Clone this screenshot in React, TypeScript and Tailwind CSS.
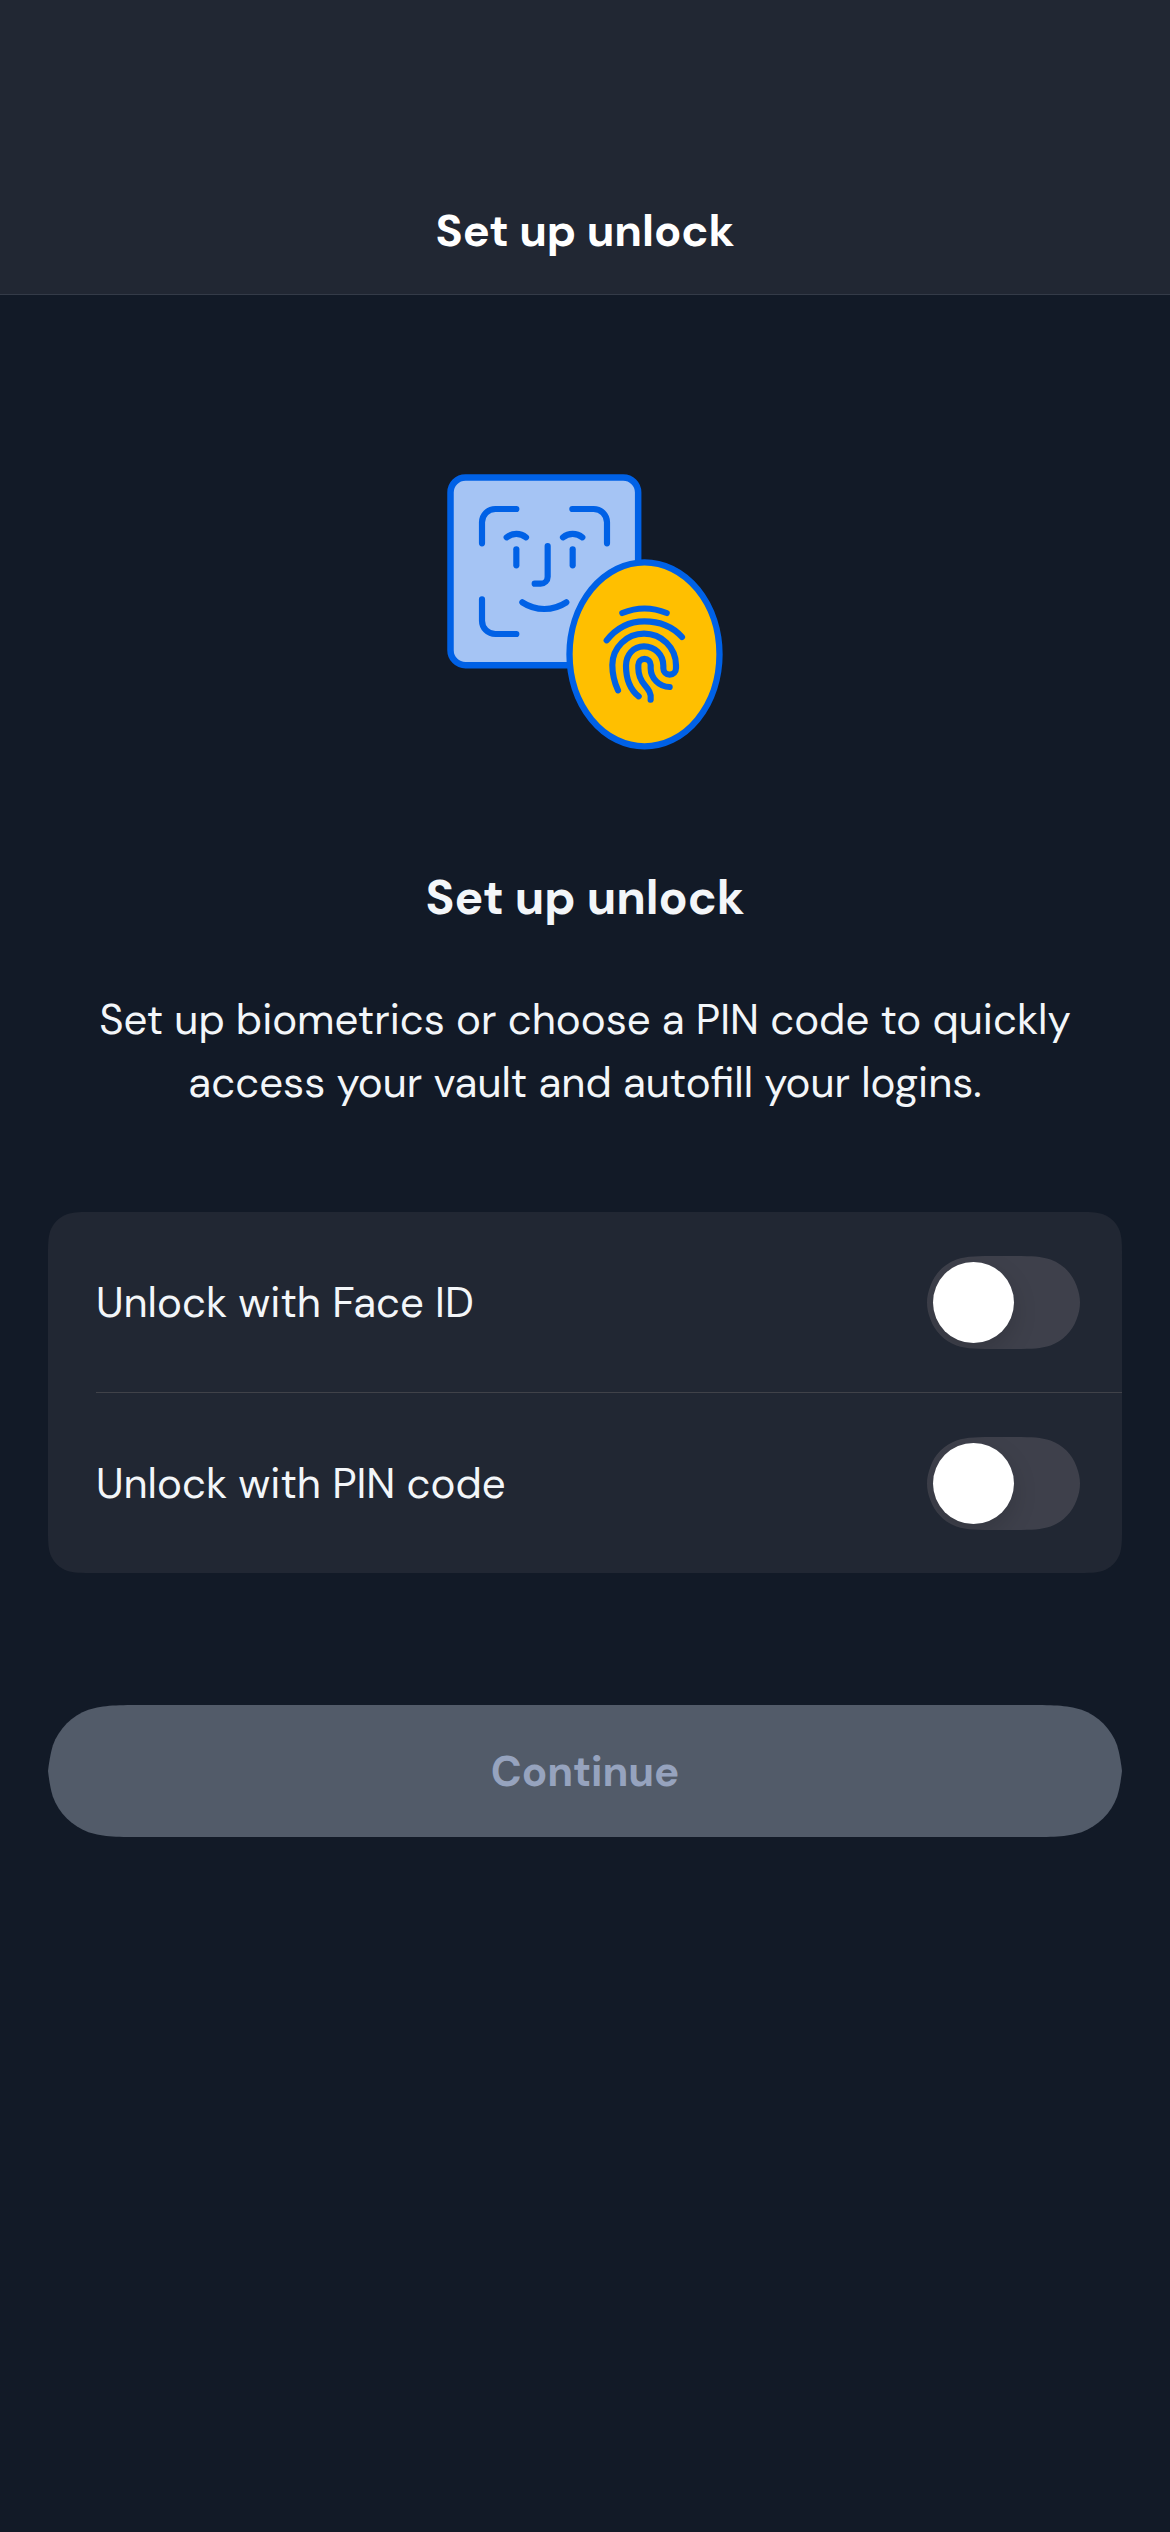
import React, { useState } from "react";

function UnlockIllustration() {
  return (
    <svg
      className="h-[276px] w-[276px]"
      viewBox="51 42 828 828"
      fill="none"
      stroke="#0061e6"
      strokeWidth="18.5"
      strokeLinecap="round"
      strokeLinejoin="round"
      aria-hidden="true"
    >
      <rect x="61.5" y="52.5" width="563" height="563" rx="45" fill="#a5c4f4" strokeWidth="19.5" />
      <path d="M156 250V187a40 40 0 0 1 40-40H259" />
      <path d="M427 147H491a40 40 0 0 1 40 40V250" />
      <path d="M156 418V482a40 40 0 0 0 40 40H259" />
      <path d="M230 232A46 46 0 0 1 288 232" />
      <path d="M399 232A46 46 0 0 1 457 232" />
      <path d="M259 268V316" />
      <path d="M428 268V316" />
      <path d="M353 258V350a21 21 0 0 1-21 21H314" />
      <path d="M277 427A119 119 0 0 0 409 427" />
      <ellipse cx="643.5" cy="583" rx="225" ry="276" fill="#ffbf00" strokeWidth="19" />
      <path d="M577 459A177 177 0 0 1 710 459" />
      <path d="M530 541C560 503 600 484 643 484C688 484 729 501 756 531" />
      <path d="M564 691C553 667 547 640 547 615C547 563 590 521 642 521C695 521 738 563 738 616V625a19 19 0 0 1-38 0V617C700 585 675 559 642 559C610 559 588 585 588 617C588 657 600 688 626 709" />
      <path d="M662 719C665 700 655 688 644 675C632 661 625 648 625 625V615a18.500 18.500 0 0 1 37 0V625C662 655 688 681 719 681" />
    </svg>
  );
}

function Toggle({ label }: { label: string }) {
  const [on, setOn] = useState(false);
  return (
    <button
      type="button"
      role="switch"
      aria-checked={on}
      aria-label={label}
      onClick={() => setOn(!on)}
      className={
        "flex h-[93px] w-[153px] items-center px-[6px] [clip-path:path('M0,46.5C0,41,1,36,3.5,29.400C7.900,17.300,17.300,7.900,29.400,3.500C40.400,0,50.600,0,71,0H82C102.400,0,112.600,0,123.600,3.500C135.700,7.900,145.100,17.300,149.500,29.400C152,36,153,41,153,46.500C153,52,152,57,149.500,63.600C145.100,75.700,135.700,85.100,123.600,89.500C112.600,93,102.400,93,82,93H71C50.600,93,40.400,93,29.400,89.500C17.300,85.100,7.900,75.700,3.500,63.600C1,57,0,52,0,46.500Z')] " +
        (on ? "justify-end bg-[#65abff]" : "justify-start bg-[#3e404b]")
      }
    >
      <span className="size-[81px] rounded-full bg-white shadow-[0_9px_24px_rgba(0,0,0,0.15)]" />
    </button>
  );
}

function SettingRow({ label }: { label: string }) {
  return (
    <div className="flex h-[180px] items-center justify-between pt-px pr-[42px]">
      <span className="text-[42px] leading-[60px]">{label}</span>
      <Toggle label={label} />
    </div>
  );
}

export default function App() {
  return (
    <div className="flex h-[2532px] w-[1170px] flex-col bg-[#121a27] font-['DM_Sans',Inter,sans-serif] text-[#f3f6f9]">
      <header className="flex h-[295px] items-end justify-center border-b border-[#343b48] bg-[#212733] pb-[33px]">
        <h1 className="text-[45px] font-bold leading-[60px] tracking-[-0.1px] text-white">Set up unlock</h1>
      </header>
      <main className="flex flex-col px-12 pt-[179px]">
        <div className="flex justify-center">
          <UnlockIllustration />
        </div>
        <h2 className="mt-[118px] text-center text-[48px] font-bold leading-[60px] tracking-[-0.1px]">Set up unlock</h2>
        <p className="mt-[60px] text-center text-[42px] leading-[63px]">
          Set up biometrics or choose a PIN code to quickly
          <br />
          access your vault and autofill your logins.
        </p>
        <section className="mt-[98px] h-[361px] bg-[#212733] pl-12 [clip-path:path('M0,45.900C0,32.700,0,26.100,2.200,18.900C5.100,11.200,11.200,5.100,18.900,2.200C26.100,0,32.700,0,45.900,0H1028.100C1041.300,0,1047.900,0,1055.100,2.200C1062.800,5.100,1068.900,11.200,1071.800,18.900C1074,26.100,1074,32.700,1074,45.900V315.100C1074,328.300,1074,334.900,1071.800,342.100C1068.900,349.800,1062.800,355.900,1055.100,358.800C1047.900,361,1041.300,361,1028.100,361H45.900C32.700,361,26.100,361,18.900,358.800C11.200,355.900,5.100,349.800,2.200,342.100C0,334.900,0,328.300,0,315.100Z')]">
          <SettingRow label="Unlock with Face ID" />
          <div className="h-px bg-[#404249]" />
          <SettingRow label="Unlock with PIN code" />
        </section>
        <button
          type="button"
          disabled
          className="mt-[132px] flex h-[132px] items-center justify-center bg-[#525b69] pt-px text-[42px] font-bold leading-[63px] tracking-[-0.1px] text-[#96a3be] [clip-path:path('M0,66C1,58,2,50,4.800,40.400C10.800,23.900,23.900,10.800,40.400,4.800C56,0,70,0,98,0H976C1004,0,1018,0,1033.600,4.800C1050.100,10.800,1063.200,23.900,1069.200,40.400C1072,50,1073,58,1074,66C1073,74,1072,82,1069.200,91.600C1063.200,108.100,1050.100,121.200,1033.600,127.200C1018,132,1004,132,976,132H98C70,132,56,132,40.400,127.200C23.900,121.200,10.800,108.100,4.800,91.600C2,82,1,74,0,66Z')]"
        >
          Continue
        </button>
      </main>
    </div>
  );
}
